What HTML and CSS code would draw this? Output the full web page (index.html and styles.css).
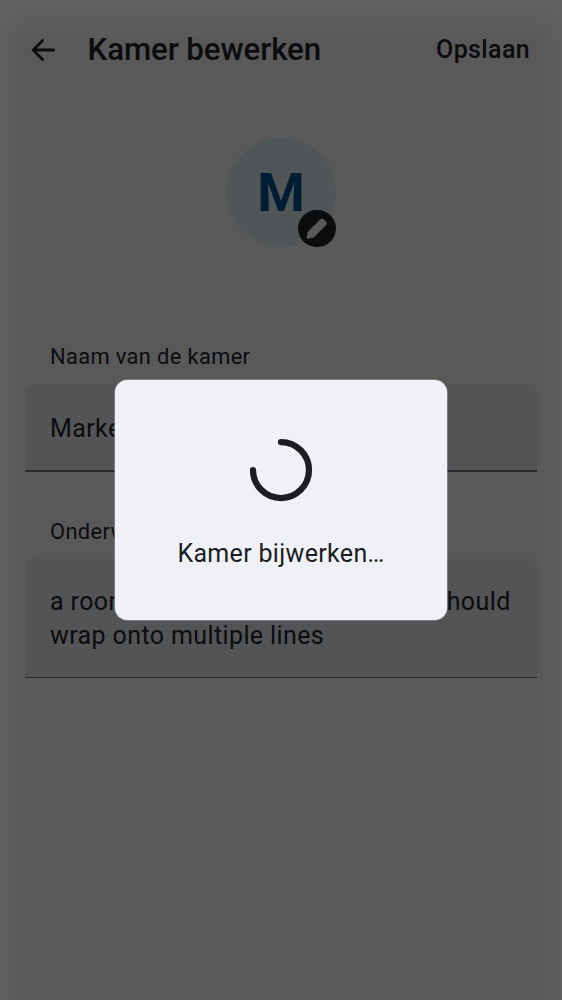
FILE: index.html
```html
<!DOCTYPE html>
<html lang="nl">
<head>
<meta charset="utf-8">
<title>Kamer bewerken</title>
<link rel="stylesheet" href="styles.css">
</head>
<body>
<main class="screen">
  <header class="topbar">
    <svg class="back" viewBox="0 0 24 22" aria-label="Terug"><path d="M11.6 1.6 2.2 11l9.4 9.4M2.2 11h20.8"/></svg>
    <h1 class="title">Kamer bewerken</h1>
    <span class="save">Opslaan</span>
  </header>
  <div class="avatar">
    <span class="initial">M</span>
    <div class="edit">
      <svg viewBox="0 0 38 38"><path d="M8.7 27.8 9.7 22.8Q9.8 22.2 10.3 21.7L22.6 9.4Q24.3 7.9 26 9.4L28.6 12Q30 13.6 28.6 15.3L16.2 27.5Q15.8 27.9 15.2 28L9.8 29.1Q8.5 29.1 8.7 27.8Z"/></svg>
    </div>
  </div>
  <section class="field">
    <div class="label">Naam van de kamer</div>
    <div class="input name">Marketing</div>
  </section>
  <section class="field">
    <div class="label">Onderwerp</div>
    <div class="input topic">a room <span class="tight">topic that is very long and</span> should<br>wrap onto multiple lines</div>
  </section>
</main>
<div class="overlay">
  <div class="dialog">
    <svg class="spinner" viewBox="0 0 64 64"><path d="M32 4a28 28 0 1 1-28 28"/></svg>
    <div class="message">Kamer bijwerken…</div>
  </div>
</div>
</body>
</html>
```

FILE: styles.css
```css
* { box-sizing: border-box; }
body {
  margin: 0;
  width: 562px;
  height: 1000px;
  overflow: hidden;
  position: relative;
  font-family: Roboto, "Liberation Sans", sans-serif;
  color: #0b0c0e;
  background:
    linear-gradient(to bottom, rgba(98,98,98,.95), rgba(89,89,89,0) 42px),
    linear-gradient(to right, #5f5f5f, #595959 25px, #595959 537px, #5f5f5f);
}
.screen { display: flex; flex-direction: column; height: 1000px; padding: 0 25px; }
.topbar { display: flex; align-items: center; height: 100px; padding: 0 7px 0 6px; }
.back { width: 24px; height: 22px; }
.back path { fill: none; stroke: #0b0c0e; stroke-width: 2.8; stroke-linecap: round; stroke-linejoin: round; }
.title { margin: 0 0 0 32.6px; font-size: 31.25px; line-height: 40px; font-weight: 500; letter-spacing: -.1px; }
.save { margin-left: auto; padding-bottom: 1px; font-size: 25px; font-weight: 500; letter-spacing: .36px; }
.avatar {
  position: relative;
  display: flex;
  align-items: center;
  justify-content: center;
  align-self: center;
  width: 109px;
  height: 109px;
  margin: 37.5px 0 0;
  border-radius: 50%;
  background: #505557;
}
.initial { font-size: 54.5px; font-weight: 700; color: #001d33; }
.edit { position: absolute; right: 0; bottom: -.5px; width: 37.5px; height: 37.5px; border-radius: 50%; background: #0b0c0e; }
.edit svg { display: block; }
.edit path { fill: #595959; }
.field { display: flex; flex-direction: column; }
.avatar + .field { margin-top: 94px; }
.field + .field { margin-top: 43.5px; }
.label { padding-left: 25px; font-size: 21.875px; line-height: 32px; letter-spacing: .36px; }
.input { margin-top: 11.5px; padding: 0 25px; background: #535456; border-radius: 8px 8px 0 0; font-size: 25px; letter-spacing: .39px; white-space: nowrap; }
.name { height: 88px; line-height: 89px; border-bottom: 2px solid #282a2e; }
.topic { height: 119px; padding-top: 26px; line-height: 34px; border-bottom: 1.5px solid #282a2e; }
.tight { letter-spacing: .18px; }
.overlay { position: absolute; inset: 0; display: flex; align-items: center; justify-content: center; }
.dialog { display: flex; flex-direction: column; align-items: center; width: 332px; height: 240px; padding-top: 58px; border-radius: 12.5px; background: #f0f1f6; box-shadow: 0 0 0 .5px #a5a5a8; }
.spinner { width: 64px; height: 64px; }
.spinner path { fill: none; stroke: #1b1d22; stroke-width: 6.25; stroke-linecap: round; }
.message { margin-top: 33px; font-size: 25px; line-height: 38px; letter-spacing: .33px; color: #1b1d22; }
```
